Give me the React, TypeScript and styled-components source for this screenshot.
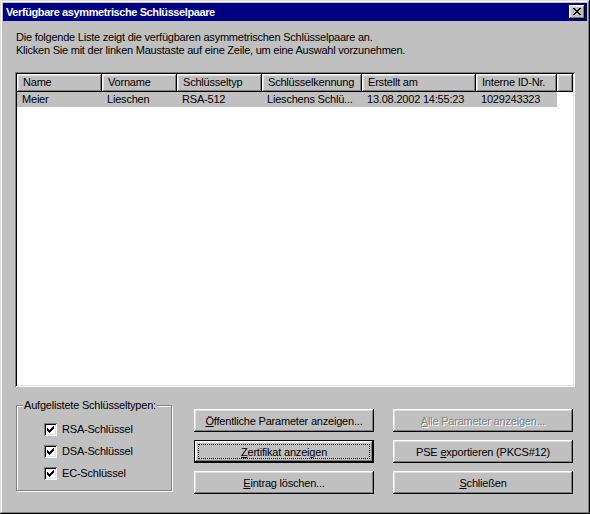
import React from "react";
import styled, { createGlobalStyle, css } from "styled-components";

const GlobalStyle = createGlobalStyle`
  html, body { margin: 0; padding: 0; background: #c0c0c0; }
  body { font-family: "Liberation Sans", Arial, sans-serif; font-size: 11px; letter-spacing: -0.2px; color: #000; }
  * { box-sizing: border-box; }
`;

const raised = css`
  box-shadow: inset -1px -1px #000, inset 1px 1px #fff, inset -2px -2px #808080, inset 2px 2px #dfdfdf;
`;

const Window = styled.div`
  width: 590px;
  height: 514px;
  background: #c0c0c0;
  padding: 3px;
  box-shadow: inset -1px -1px #000, inset 1px 1px #dfdfdf, inset -2px -2px #808080, inset 2px 2px #fff;
  display: flex;
  flex-direction: column;
`;

const TitleBar = styled.div`
  height: 18px;
  background: #000080;
  color: #fff;
  display: flex;
  align-items: center;
  justify-content: space-between;
  padding: 0 2px 0 3px;
`;

const TitleText = styled.span`
  font-weight: bold;
  font-size: 11px;
  letter-spacing: -0.4px;
  line-height: 18px;
  white-space: nowrap;
`;

const CloseButton = styled.button`
  width: 16px;
  height: 14px;
  padding: 0;
  border: none;
  background: #c0c0c0;
  ${raised};
  display: flex;
  align-items: center;
  justify-content: center;
  padding-bottom: 1px;
`;

const Content = styled.div`
  flex: 1;
  display: flex;
  flex-direction: column;
  padding: 10px 12px 0 12px;
`;

const Intro = styled.div`
  margin-left: 1px;
  line-height: 13px;
  letter-spacing: -0.23px;
`;

const ListBox = styled.div`
  margin-top: 15px;
  height: 315px;
  background: #fff;
  padding: 2px;
  box-shadow: inset 1px 1px #808080, inset -1px -1px #fff, inset 2px 2px #000, inset -2px -2px #dfdfdf;
  display: flex;
  flex-direction: column;
`;

const HeaderRow = styled.div`
  display: flex;
  height: 18px;
`;

const HeaderCell = styled.div<{ $w?: number }>`
  ${(p) => (p.$w ? `width: ${p.$w}px; flex: none;` : "flex: 1;")}
  height: 18px;
  background: #c0c0c0;
  ${raised};
  padding-left: 6px;
  line-height: 17px;
  white-space: nowrap;
  overflow: hidden;
`;

const Row = styled.div<{ $selected?: boolean }>`
  display: flex;
  width: max-content;
  height: 15px;
  line-height: 15px;
  background: ${(p) => (p.$selected ? "#c0c0c0" : "transparent")};
`;

const Cell = styled.div<{ $w: number }>`
  width: ${(p) => p.$w}px;
  padding-left: 5px;
  white-space: nowrap;
  overflow: hidden;
`;

const BottomRow = styled.div`
  margin-top: 12px;
  display: flex;
  align-items: flex-start;
`;

const GroupBox = styled.div`
  position: relative;
  margin-left: 1px;
  width: 157px;
  padding-top: 6px;
`;

const GroupFrame = styled.div`
  width: 156px;
  height: 86px;
  border: 1px solid #808080;
  box-shadow: inset 1px 1px #fff, 1px 1px #fff;
  padding: 17px 0 0 27px;
  display: flex;
  flex-direction: column;
  gap: 9px;
`;

const Legend = styled.span`
  position: absolute;
  top: 0;
  left: 7px;
  padding: 0 1px;
  background: #c0c0c0;
  line-height: 13px;
  white-space: nowrap;
`;

const CheckRow = styled.label`
  display: flex;
  align-items: center;
  height: 13px;
  line-height: 13px;
  gap: 5px;
`;

const CheckBox = styled.span`
  width: 13px;
  height: 13px;
  background: #fff;
  box-shadow: inset 1px 1px #808080, inset -1px -1px #fff, inset 2px 2px #000, inset -2px -2px #dfdfdf;
  display: flex;
  align-items: flex-start;
  justify-content: flex-start;
  padding: 3px 0 0 3px;
`;

const ButtonGrid = styled.div`
  margin-top: 10px;
  margin-left: 21px;
  display: grid;
  grid-template-columns: 180px 180px;
  column-gap: 19px;
  row-gap: 8px;
`;

const Button = styled.button<{ $default?: boolean }>`
  position: relative;
  height: 23px;
  width: 180px;
  padding: 0;
  border: none;
  background: #c0c0c0;
  font: 11px "Liberation Sans", Arial, sans-serif;
  letter-spacing: -0.2px;
  color: #000;
  ${raised};
  ${(p) =>
    p.$default &&
    css`
      box-shadow: inset 0 0 0 1px #000, inset -2px -2px #000, inset 2px 2px #fff, inset -3px -3px #808080,
        inset 3px 3px #dfdfdf;
      &::after {
        content: "";
        position: absolute;
        inset: 4px;
        border: 1px dotted #000;
      }
    `}
  &:disabled {
    color: #808080;
    text-shadow: 1px 1px #fff;
  }
`;

const Key = styled.span`
  text-decoration: underline;
`;

const CloseGlyph = () => (
  <svg width="8" height="7" viewBox="0 0 8 7" shapeRendering="crispEdges">
    <g fill="#000">
      <rect x="0" y="0" width="2" height="1" />
      <rect x="6" y="0" width="2" height="1" />
      <rect x="1" y="1" width="2" height="1" />
      <rect x="5" y="1" width="2" height="1" />
      <rect x="2" y="2" width="4" height="1" />
      <rect x="3" y="3" width="2" height="1" />
      <rect x="2" y="4" width="4" height="1" />
      <rect x="1" y="5" width="2" height="1" />
      <rect x="5" y="5" width="2" height="1" />
      <rect x="0" y="6" width="2" height="1" />
      <rect x="6" y="6" width="2" height="1" />
    </g>
  </svg>
);

const CheckGlyph = () => (
  <svg width="7" height="7" viewBox="0 0 7 7" shapeRendering="crispEdges">
    <g fill="#000">
      <rect x="6" y="0" width="1" height="1" />
      <rect x="5" y="1" width="2" height="1" />
      <rect x="0" y="2" width="1" height="1" />
      <rect x="4" y="2" width="3" height="1" />
      <rect x="0" y="3" width="2" height="1" />
      <rect x="3" y="3" width="3" height="1" />
      <rect x="0" y="4" width="5" height="1" />
      <rect x="1" y="5" width="3" height="1" />
      <rect x="2" y="6" width="1" height="1" />
    </g>
  </svg>
);

const columns = [
  { title: "Name", w: 85 },
  { title: "Vorname", w: 75 },
  { title: "Schlüsseltyp", w: 85 },
  { title: "Schlüsselkennung", w: 100 },
  { title: "Erstellt am", w: 114 },
  { title: "Interne ID-Nr.", w: 81 },
];

const rows = [["Meier", "Lieschen", "RSA-512", "Lieschens Schlü...", "13.08.2002 14:55:23", "1029243323"]];

const keyTypes = ["RSA-Schlüssel", "DSA-Schlüssel", "EC-Schlüssel"];

export default function App() {
  return (
    <>
      <GlobalStyle />
      <Window>
        <TitleBar>
          <TitleText>Verfügbare asymmetrische Schlüsselpaare</TitleText>
          <CloseButton aria-label="Schließen">
            <CloseGlyph />
          </CloseButton>
        </TitleBar>
        <Content>
          <Intro>
            Die folgende Liste zeigt die verfügbaren asymmetrischen Schlüsselpaare an.
            <br />
            Klicken Sie mit der linken Maustaste auf eine Zeile, um eine Auswahl vorzunehmen.
          </Intro>
          <ListBox>
            <HeaderRow>
              {columns.map((c) => (
                <HeaderCell key={c.title} $w={c.w}>
                  {c.title}
                </HeaderCell>
              ))}
              <HeaderCell />
            </HeaderRow>
            {rows.map((r, i) => (
              <Row key={i} $selected>
                {r.map((v, j) => (
                  <Cell key={j} $w={columns[j].w}>
                    {v}
                  </Cell>
                ))}
              </Row>
            ))}
          </ListBox>
          <BottomRow>
            <GroupBox>
              <Legend>Aufgelistete Schlüsseltypen:</Legend>
              <GroupFrame>
                {keyTypes.map((k) => (
                  <CheckRow key={k}>
                    <CheckBox>
                      <CheckGlyph />
                    </CheckBox>
                    {k}
                  </CheckRow>
                ))}
              </GroupFrame>
            </GroupBox>
            <ButtonGrid>
              <Button>
                <Key>Ö</Key>ffentliche Parameter anzeigen...
              </Button>
              <Button disabled>
                <Key>A</Key>lle Parameter anzeigen...
              </Button>
              <Button $default>
                <Key>Z</Key>ertifikat anzeigen
              </Button>
              <Button>
                PSE <Key>e</Key>xportieren (PKCS#12)
              </Button>
              <Button>
                <Key>E</Key>intrag löschen...
              </Button>
              <Button>
                <Key>S</Key>chließen
              </Button>
            </ButtonGrid>
          </BottomRow>
        </Content>
      </Window>
    </>
  );
}
